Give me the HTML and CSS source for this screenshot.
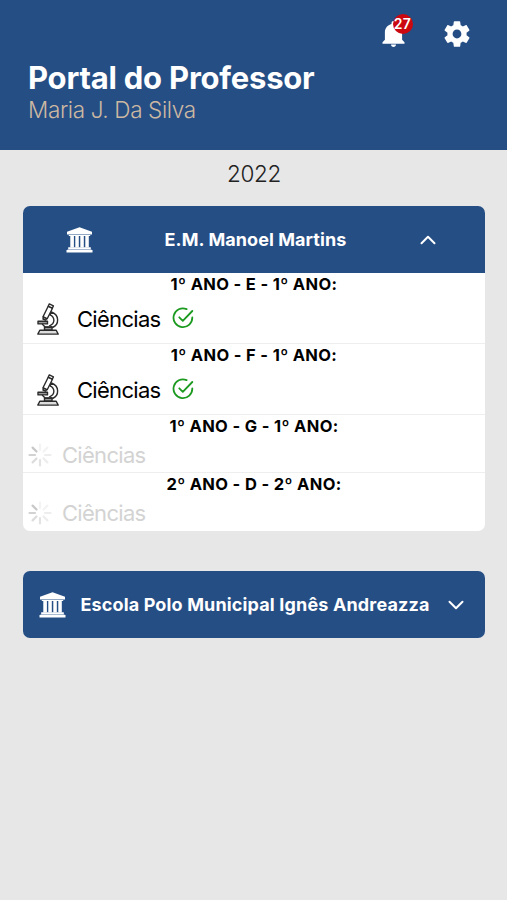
FILE: index.html
```
<!DOCTYPE html>
<html lang="pt-BR">
<head>
<meta charset="utf-8">
<title>Portal do Professor</title>
<link rel="stylesheet" href="styles.css">
</head>
<body>
<svg class="sprite" aria-hidden="true">
  <symbol id="bank" viewBox="0 0 27 26">
    <path fill="currentColor" d="M13.500 .2 26 4.800V7.500H1V4.800zM4.300 8.400h3.600v12H4.300zM9.300 8.400h3.500v12H9.300zM14.300 8.400h3.500v12h-3.500zM19.300 8.400h3.500v12h-3.500zM2.800 8h21.400v1H2.800z"/>
    <path fill="currentColor" d="M2.200 20.300h22.600v2H2.200zM.5 23.100h26v2.300H.5z"/>
    <path fill="currentColor" opacity=".6" d="M1.500 22.200h24v1h-24z"/>
  </symbol>
  <symbol id="microscope" viewBox="0 0 22 32">
    <g fill="#fff" stroke="#2b2b2b" stroke-width="1.400" stroke-linejoin="round" stroke-linecap="round">
      <path d="M14.500 9C22.500 12 22.500 21.500 15.500 24.500L12.500 22.800C18.500 20.500 18 14 13 11.800z"/>
      <path d="M11.200 3.200 15.500 5.300 10.200 15.800 6 13.800z"/>
      <path d="M12.300 .9 16.400 2.900 15.300 5.200 11.200 3.200z"/>
      <path d="M6.300 14 9.600 15.600 8.600 17.200 6 16z"/>
      <path fill="#999" d="M1 18.300h9.500v2.600H1z"/>
      <path d="M5.500 21.300 8 24h7"/>
      <path fill="#999" d="M7.500 24.300h7.500v2.900H7.500z"/>
      <path fill="#ddd" d="M2.800 27.200h16.400l2 3.900H.8z"/>
    </g>
  </symbol>
  <symbol id="check" viewBox="0 0 22 22">
    <path d="M14.600 2.100A9.400 9.400 0 1 0 20.300 10.400M7.300 10.300l3.500 3.500L20.300 4" fill="none" stroke="#1c9a20" stroke-width="1.800" stroke-linecap="round" stroke-linejoin="round"/>
  </symbol>
  <symbol id="spinner" viewBox="0 0 24 24">
    <g fill="none" stroke-width="2.200" stroke-linecap="round">
      <path stroke="#f3f3f3" d="M12 1.500v5.500M19.400 4.600 15.500 8.500"/>
      <path stroke="#ededed" d="M22.500 12H17M19.400 19.400 15.500 15.500"/>
      <path stroke="#e3e3e3" d="M12 22.500V17"/>
      <path stroke="#dcdcdc" d="M4.600 19.400 8.500 15.500"/>
      <path stroke="#d2d2d2" d="M1.500 12H7"/>
      <path stroke="#c8c8c8" d="M4.600 4.600 8.500 8.500"/>
    </g>
  </symbol>
</svg>
<header class="header">
  <div class="actions">
    <div class="bell">
      <svg width="23" height="27" viewBox="0 0 23 27"><path fill="#fff" d="M11.500 1c1.200 0 2 .9 2 2v1c4 1 6.600 4.400 6.600 8.500v7.300l2.400 2.400v1.500H.5v-1.500l2.400-2.400v-7.300C2.900 8.400 5.500 5 9.500 4V3c0-1.100.8-2 2-2zM9 24.600h5c0 1.400-1.100 2.300-2.500 2.300S9 26 9 24.600z"/></svg>
      <span class="badge">27</span>
    </div>
    <svg class="gear" width="32" height="32" viewBox="0 0 24 24"><path fill="#fff" d="M19.140 12.940c.04-.3.060-.61.060-.94 0-.32-.02-.64-.07-.94l2.030-1.580c.18-.14.230-.41.120-.61l-1.920-3.320c-.12-.22-.37-.29-.59-.22l-2.390.96c-.5-.38-1.030-.7-1.620-.94l-.36-2.540c-.04-.24-.24-.41-.48-.41h-3.840c-.24 0-.43.170-.47.410l-.36 2.540c-.59.240-1.130.570-1.620.940l-2.390-.96c-.22-.08-.47 0-.59.220L2.740 8.870c-.12.210-.08.470.120.610l2.030 1.580c-.05.300-.09.630-.09.940s.02.640.070.940l-2.030 1.580c-.18.140-.23.410-.12.610l1.920 3.320c.12.220.370.290.590.220l2.390-.96c.5.380 1.030.700 1.620.940l.36 2.540c.05.240.240.410.480.410h3.840c.24 0 .44-.17.470-.41l.36-2.540c.59-.24 1.130-.56 1.620-.94l2.390.96c.22.080.470 0 .59-.22l1.920-3.320c.12-.22.070-.47-.12-.61l-2.010-1.580zM12 15.300c-1.820 0-3.300-1.480-3.300-3.300s1.480-3.300 3.300-3.300 3.300 1.480 3.300 3.300-1.480 3.300-3.300 3.300z"/></svg>
  </div>
  <h1 class="title">Portal do Professor</h1>
  <p class="teacher">Maria J. Da Silva</p>
</header>
<main class="content">
  <p class="year">2022</p>
  <section class="school">
    <button class="school-head">
      <svg class="bank"><use href="#bank"/></svg>
      <span class="school-name">E.M. Manoel Martins</span>
      <svg class="chevron" viewBox="0 0 16 10"><path d="M1.500 8.300 8 1.700l6.500 6.600"/></svg>
    </button>
    <div class="classes">
      <article class="class-row">
        <h2 class="class-name">1º ANO - E - 1º ANO:</h2>
        <div class="subject"><svg class="microscope"><use href="#microscope"/></svg><span class="subject-name">Ciências</span><svg class="check"><use href="#check"/></svg></div>
      </article>
      <article class="class-row">
        <h2 class="class-name">1º ANO - F - 1º ANO:</h2>
        <div class="subject"><svg class="microscope"><use href="#microscope"/></svg><span class="subject-name">Ciências</span><svg class="check"><use href="#check"/></svg></div>
      </article>
      <article class="class-row loading">
        <h2 class="class-name">1º ANO - G - 1º ANO:</h2>
        <div class="subject"><svg class="spinner"><use href="#spinner"/></svg><span class="subject-name">Ciências</span></div>
      </article>
      <article class="class-row loading">
        <h2 class="class-name">2º ANO - D - 2º ANO:</h2>
        <div class="subject"><svg class="spinner"><use href="#spinner"/></svg><span class="subject-name">Ciências</span></div>
      </article>
    </div>
  </section>
  <section class="school">
    <button class="school-head closed">
      <svg class="bank"><use href="#bank"/></svg>
      <span class="school-name">Escola Polo Municipal Ignês Andreazza</span>
      <svg class="chevron" viewBox="0 0 16 10"><path d="M1.500 1.700 8 8.300l6.500-6.600"/></svg>
    </button>
  </section>
</main>
</body>
</html>
```
FILE: styles.css
```
* { box-sizing: border-box; margin: 0; padding: 0; }
body {
  min-height: 900px;
  background: #e7e7e7;
  color: #000;
  font-family: Inter, "Liberation Sans", sans-serif;
}
svg { display: block; flex: none; }
.sprite { position: absolute; width: 0; height: 0; }
.header {
  height: 150px;
  padding: 18px 34px 0 28px;
  background: #254e85;
}
.actions { display: flex; justify-content: flex-end; align-items: flex-start; gap: 36.5px; height: 42px; }
.bell { position: relative; padding-top: 2px; }
.badge {
  position: absolute;
  left: 11px;
  top: -4px;
  width: 20px;
  height: 20px;
  border-radius: 50%;
  background: #cb0710;
  color: #fff;
  font-size: 14px;
  font-weight: 600;
  line-height: 20px;
  text-align: center;
  letter-spacing: 0.4px;
}
.title { color: #fff; font-size: 31px; font-weight: 700; line-height: 36px; letter-spacing: -0.22px; white-space: nowrap; }
.teacher { color: #cdb9a2; font-size: 22.5px; font-weight: 300; line-height: 28px; letter-spacing: -0.36px; white-space: nowrap; }
.content { padding: 9px 22px 0 23px; }
.year { color: #222; font-size: 22.5px; font-weight: 350; line-height: 29px; letter-spacing: -0.3px; text-align: center; }
.school { margin-top: 18px; }
.school + .school { margin-top: 40px; }
.school-head {
  display: flex;
  justify-content: space-between;
  align-items: center;
  width: 100%;
  height: 67px;
  padding: 0 49px 0 43px;
  border: 0;
  border-radius: 7px 7px 0 0;
  background: #254e85;
  color: #fff;
  font: inherit;
  font-size: 18px;
  font-weight: 700;
  letter-spacing: 0.07px;
}
.school-head .school-name { margin-right: 2px; }
.school-head.closed { padding: 0 21px 0 16px; border-radius: 7px; letter-spacing: 0.15px; }
.school-name { white-space: nowrap; }
.bank { width: 27px; height: 26px; }
.chevron { width: 16px; height: 10px; fill: none; stroke: #fff; stroke-width: 2; stroke-linecap: round; stroke-linejoin: round; }
.closed .school-name { margin-right: 4px; }
.classes { background: #fff; border-radius: 0 0 7px 7px; overflow: hidden; }
.class-row { height: 71px; border-bottom: 1px solid #eee; }
.class-row.loading { height: 58px; }
.class-row:last-child { border-bottom: 0; }
.class-name { font-size: 16.5px; font-weight: 700; line-height: 22px; letter-spacing: 0.35px; text-align: center; }
.subject { display: flex; align-items: center; height: 47px; padding-left: 14px; }
.microscope { width: 22px; height: 32px; }
.subject-name { margin-left: 18px; font-size: 22px; font-weight: 380; line-height: 28px; letter-spacing: -0.7px; white-space: nowrap; }
.check { width: 22px; height: 22px; margin-left: 11px; margin-bottom: 1px; }
.loading .subject { height: 35px; padding-left: 5px; }
.spinner { width: 24px; height: 24px; }
.loading .subject-name { margin-left: 10px; color: #d3d3d3; }
```
